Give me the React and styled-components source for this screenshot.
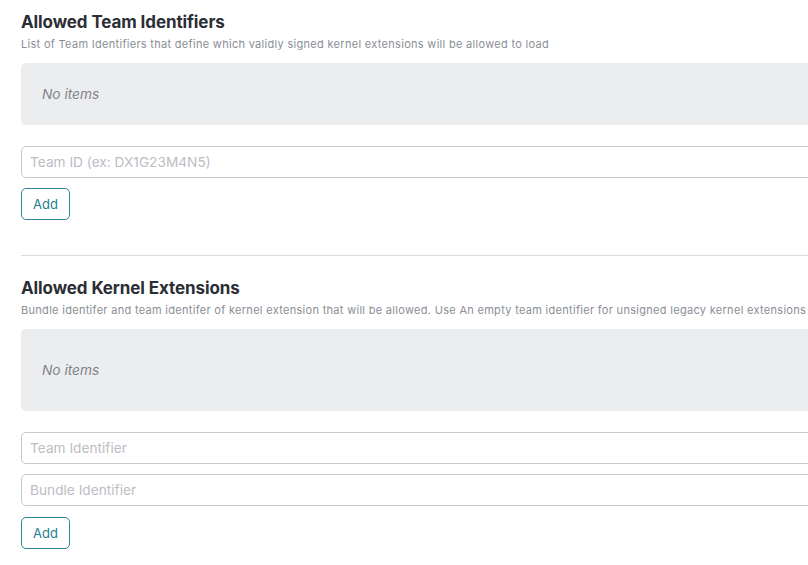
import React from "react";
import styled, { createGlobalStyle } from "styled-components";

const Global = createGlobalStyle`
  html, body { margin: 0; padding: 0; background: #fff; overflow: hidden; }
  body { font-family: Inter, "Noto Sans", sans-serif; -webkit-font-smoothing: antialiased; }
`;

const Page = styled.div`
  width: 900px;
  padding: 11px 0 0 21px;
  box-sizing: border-box;
`;

const Section = styled.section`
  display: flex;
  flex-direction: column;
  margin-top: ${(p) => p.$mt || 0}px;
`;

const Title = styled.h2`
  margin: 0;
  font-size: 17px;
  line-height: 22px;
  font-weight: 700;
  color: #2c2e35;
  letter-spacing: -0.1px;
`;

const Subtitle = styled.p`
  margin: 4px 0 0;
  font-size: 11px;
  line-height: 14px;
  letter-spacing: 0.3px;
  color: #8b8e96;
`;

const EmptyBox = styled.div`
  margin-top: 12px;
  height: ${(p) => p.$h}px;
  background: #ecedef;
  border-radius: 5px;
  display: flex;
  align-items: center;
  padding-left: 21px;
  font-size: 13.7px;
  font-style: italic;
  color: #80838b;
`;

const Fields = styled.div`
  margin-top: 21px;
  display: flex;
  flex-direction: column;
  gap: 10px;
`;

const Input = styled.input`
  height: 32px;
  box-sizing: border-box;
  border: 1px solid #c9c9d0;
  border-radius: 5px;
  padding: 0 8px;
  font-family: inherit;
  font-size: 13.7px;
  color: #2c2e35;
  outline: none;
  &::placeholder { color: #bdbdc4; }
`;

const AddButton = styled.button`
  align-self: flex-start;
  margin-top: ${(p) => p.$mt || 0}px;
  width: 49px;
  height: 32px;
  box-sizing: border-box;
  border: 1px solid #2b8797;
  border-radius: 5px;
  background: #fff;
  color: #1f7d8e;
  font-family: inherit;
  font-size: 13px;
  padding: 0;
`;

const Divider = styled.hr`
  margin: 35px 0 0;
  border: none;
  border-top: 1px solid #dcdce0;
`;

export default function App() {
  return (
    <>
      <Global />
      <Page>
        <Section>
          <Title>Allowed Team Identifiers</Title>
          <Subtitle>List of Team Identifiers that define which validly signed kernel extensions will be allowed to load</Subtitle>
          <EmptyBox $h={62}>No items</EmptyBox>
          <Fields>
            <Input placeholder="Team ID (ex: DX1G23M4N5)" />
            <AddButton>Add</AddButton>
          </Fields>
        </Section>
        <Divider />
        <Section $mt={21}>
          <Title>Allowed Kernel Extensions</Title>
          <Subtitle>Bundle identifer and team identifer of kernel extension that will be allowed. Use An empty team identifier for unsigned legacy kernel extensions</Subtitle>
          <EmptyBox $h={82}>No items</EmptyBox>
          <Fields>
            <Input placeholder="Team Identifier" />
            <Input placeholder="Bundle Identifier" />
            <AddButton $mt={1}>Add</AddButton>
          </Fields>
        </Section>
      </Page>
    </>
  );
}
